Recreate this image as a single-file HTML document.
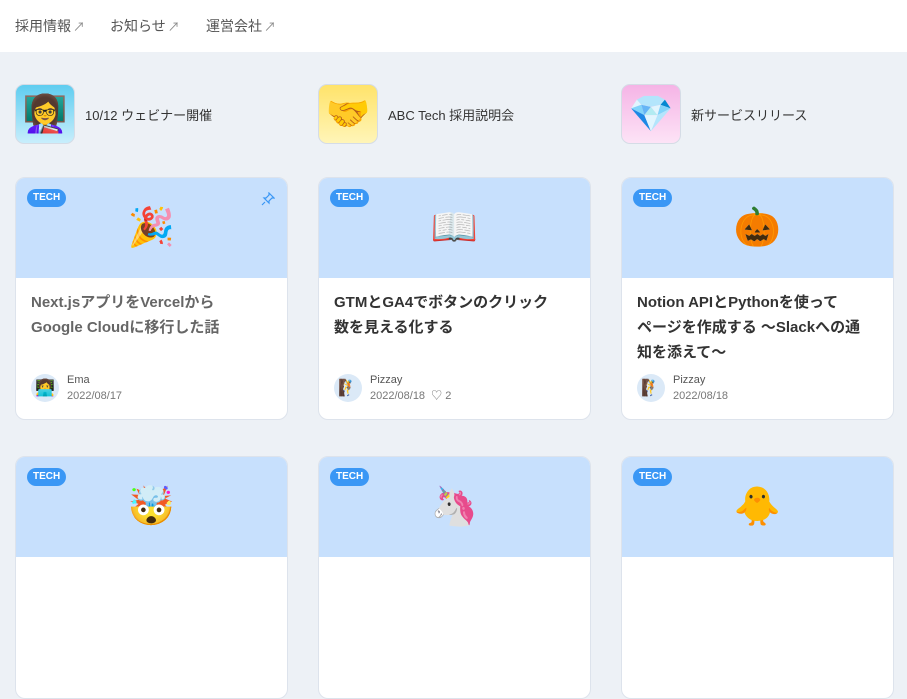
<!DOCTYPE html>
<html><head><meta charset="utf-8"><style>
*{box-sizing:border-box;margin:0;padding:0}
body{width:907px;height:534px;overflow:hidden;background:#edf1f6;font-family:"Liberation Sans","Noto Sans CJK JP",sans-serif;color:#333;position:relative}
.hd{position:absolute;left:0;top:0;width:907px;height:52px;background:#fff}
.hd span{position:absolute;top:16px;font-size:14px;color:#555}
.hd i{font-style:normal;color:#888;font-size:12px;margin-left:2px}
.bn{position:absolute;top:84px;display:flex;align-items:center}
.bi{width:60px;height:60px;border-radius:9px;border:1px solid #d5dce6;display:flex;align-items:center;justify-content:center;font-size:36px}
.bn span{font-size:13px;margin-left:10px;color:#333}
.card{position:absolute;width:273px;height:243px;background:#fff;border:1px solid #dde3ec;border-radius:10px;overflow:hidden}
.top{height:100px;background:#c7e0fd;position:relative;display:flex;align-items:center;justify-content:center;font-size:38px}
.tag{position:absolute;left:11px;top:11px;background:#3a97f5;color:#fff;font-size:10px;font-weight:bold;padding:3px 6px;border-radius:9px;line-height:12px}
.t{position:absolute;left:15px;top:112px;width:260px;font-size:15px;font-weight:bold;line-height:25px;white-space:nowrap}
.au{position:absolute;left:15px;top:194px;display:flex;align-items:center}
.av{width:28px;height:28px;border-radius:50%;background:#dbe9f7;font-size:16px;display:flex;align-items:center;justify-content:center}
.au div.m{margin-left:8px;font-size:11px;color:#555;line-height:16px}
.au .d{color:#777}
</style></head><body>
<div class="hd"><span style="left:15px">採用情報<i>↗</i></span><span style="left:110px">お知らせ<i>↗</i></span><span style="left:206px">運営会社<i>↗</i></span></div>
<div class="bn" style="left:15px"><div class="bi" style="background:linear-gradient(#5fcdf0,#c8eefc)">👩‍🏫</div><span>10/12 ウェビナー開催</span></div>
<div class="bn" style="left:318px"><div class="bi" style="background:linear-gradient(#ffe36a,#fff5b8)">🤝</div><span>ABC Tech 採用説明会</span></div>
<div class="bn" style="left:621px"><div class="bi" style="background:linear-gradient(#f5b4e6,#fde3f6)">💎</div><span>新サービスリリース</span></div>

<div class="card" style="left:15px;top:177px"><div class="top"><span class="tag">TECH</span>🎉<svg style="position:absolute;right:12px;top:14px" width="14" height="14" viewBox="0 0 14 14" fill="none" stroke="#3a97f5" stroke-width="1.2"><path d="M8 1l5 5-2 0-3 3 0 2-5-5 2 0 3-3z M4 10l-3 3"/></svg></div>
<div class="t" style="color:#666">Next.jsアプリをVercelから<br>Google Cloudに移行した話</div>
<div class="au"><div class="av">👩‍💻</div><div class="m">Ema<br><span class="d">2022/08/17</span></div></div></div>

<div class="card" style="left:318px;top:177px"><div class="top"><span class="tag">TECH</span>📖</div>
<div class="t">GTMとGA4でボタンのクリック<br>数を見える化する</div>
<div class="au"><div class="av">🧗</div><div class="m">Pizzay<br><span class="d">2022/08/18 &nbsp;♡ 2</span></div></div></div>

<div class="card" style="left:621px;top:177px"><div class="top"><span class="tag">TECH</span>🎃</div>
<div class="t">Notion APIとPythonを使って<br>ページを作成する 〜Slackへの通<br>知を添えて〜</div>
<div class="au"><div class="av">🧗</div><div class="m">Pizzay<br><span class="d">2022/08/18</span></div></div></div>

<div class="card" style="left:15px;top:456px"><div class="top"><span class="tag">TECH</span>🤯</div></div>
<div class="card" style="left:318px;top:456px"><div class="top"><span class="tag">TECH</span>🦄</div></div>
<div class="card" style="left:621px;top:456px"><div class="top"><span class="tag">TECH</span>🐥</div></div>
</body></html>
